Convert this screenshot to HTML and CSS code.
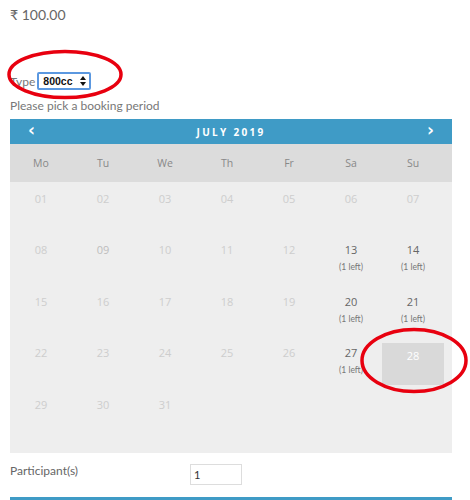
FILE: index.html
```html
<!DOCTYPE html>
<html>
<head>
<meta charset="utf-8">
<link rel="stylesheet" href="styles.css">
</head>
<body>
<div class="page">
  <p class="price">₹ 100.00</p>
  <div class="type-row">
    <label class="type-label" for="type">Type</label>
    <span class="select-wrap">
      <select id="type" class="type-select"><option>800cc</option></select>
      <svg class="select-arrows" width="6" height="10" viewBox="0 0 6 10"><path d="M3 0 L6 4 H0 Z M3 10 L6 6 H0 Z" fill="#111"/></svg>
    </span>
  </div>
  <p class="pick">Please pick a booking period</p>
  <div class="cal">
    <div class="cal-head">
      <span class="chev">&#x2039;</span>
      <span class="month">JULY 2019</span>
      <span class="chev">&#x203A;</span>
    </div>
    <div class="cal-dow">
      <span>Mo</span><span>Tu</span><span>We</span><span>Th</span><span>Fr</span><span>Sa</span><span>Su</span>
    </div>
    <div class="cal-body">
      <div class="day off"><span class="num">01</span></div>
      <div class="day off"><span class="num">02</span></div>
      <div class="day off"><span class="num">03</span></div>
      <div class="day off"><span class="num">04</span></div>
      <div class="day off"><span class="num">05</span></div>
      <div class="day off"><span class="num">06</span></div>
      <div class="day off"><span class="num">07</span></div>
      <div class="day off"><span class="num">08</span></div>
      <div class="day off dim"><span class="num">09</span></div>
      <div class="day off"><span class="num">10</span></div>
      <div class="day off"><span class="num">11</span></div>
      <div class="day off"><span class="num">12</span></div>
      <div class="day"><span class="num">13</span><span class="left">(1 left)</span></div>
      <div class="day"><span class="num">14</span><span class="left">(1 left)</span></div>
      <div class="day off"><span class="num">15</span></div>
      <div class="day off"><span class="num">16</span></div>
      <div class="day off"><span class="num">17</span></div>
      <div class="day off"><span class="num">18</span></div>
      <div class="day off"><span class="num">19</span></div>
      <div class="day"><span class="num">20</span><span class="left">(1 left)</span></div>
      <div class="day"><span class="num">21</span><span class="left">(1 left)</span></div>
      <div class="day off"><span class="num">22</span></div>
      <div class="day off"><span class="num">23</span></div>
      <div class="day off"><span class="num">24</span></div>
      <div class="day off"><span class="num">25</span></div>
      <div class="day off"><span class="num">26</span></div>
      <div class="day"><span class="num">27</span><span class="left">(1 left)</span></div>
      <div class="day sel"><span class="num">28</span></div>
      <div class="day off"><span class="num">29</span></div>
      <div class="day off"><span class="num">30</span></div>
      <div class="day off"><span class="num">31</span></div>
    </div>
  </div>
  <div class="part-row">
    <label class="part-label" for="part">Participant(s)</label>
    <input id="part" class="part-input" type="text" value="1">
  </div>
  <div class="submit-bar"></div>
</div>
<svg class="marks" width="470" height="500" viewBox="0 0 470 500">
  <ellipse cx="65" cy="74.5" rx="56" ry="23" fill="none" stroke="#e8000f" stroke-width="3.5"/>
  <ellipse cx="414" cy="360.5" rx="52" ry="31" fill="none" stroke="#e8000f" stroke-width="3.5"/>
</svg>
</body>
</html>
```

FILE: styles.css
```css
html, body {
  margin: 0;
  padding: 0;
  background: #fff;
}
body {
  position: relative;
  width: 470px;
  height: 500px;
  overflow: hidden;
  font-family: "Lato", "Open Sans", sans-serif;
  color: #666;
}
.page {
  padding: 0 18px 0 10px;
}
.price {
  margin: 0;
  padding-top: 6px;
  font-size: 14px;
  line-height: 18px;
  color: #666;
}
.type-row {
  display: flex;
  align-items: center;
  margin-top: 48px;
  height: 18px;
}
.type-label {
  font-size: 12px;
  color: #777;
  margin-right: 2px;
}
.select-wrap {
  position: relative;
  display: flex;
}
.type-select {
  -webkit-appearance: none;
  appearance: none;
  width: 54px;
  height: 18px;
  box-sizing: border-box;
  border: 2px solid #5b98e0;
  border-radius: 2px;
  background: #fff;
  font-family: "Liberation Sans", sans-serif;
  font-weight: bold;
  font-size: 10.5px;
  color: #111;
  padding: 0 0 0 4px;
  margin: 0;
  outline: none;
}
.select-arrows {
  position: absolute;
  right: 5px;
  top: 4px;
}
.pick {
  margin: 8px 0 0;
  font-size: 12px;
  line-height: 16px;
  color: #777;
}
.cal {
  margin-top: 5px;
  width: 442px;
}
.cal-head {
  height: 25px;
  background: #3f9bc6;
  display: flex;
  align-items: center;
  justify-content: space-between;
  padding: 0 18px;
  color: #fff;
}
.chev {
  font-family: "DejaVu Sans", sans-serif;
  font-weight: bold;
  font-size: 17px;
  line-height: 25px;
  margin-top: -3px;
}
.month {
  font-family: "Open Sans", sans-serif;
  font-weight: bold;
  font-size: 10px;
  letter-spacing: 2.3px;
}
.cal-dow {
  height: 38px;
  background: #dcdcdc;
  display: grid;
  grid-template-columns: repeat(7, 62px);
  align-items: center;
  justify-items: center;
  font-family: "Open Sans", sans-serif;
  font-size: 10.5px;
  color: #888;
}
.cal-body {
  background: #eeeeee;
  display: grid;
  grid-template-columns: repeat(7, 62px);
  grid-auto-rows: 51.5px;
  padding-bottom: 13.5px;
}
.day {
  margin-top: 6.5px;
  height: 42px;
  display: flex;
  flex-direction: column;
  align-items: center;
  font-family: "Open Sans", sans-serif;
}
.num {
  font-size: 11px;
  line-height: 15px;
  margin-top: 2px;
  color: #666;
}
.off .num {
  color: #cdcdcd;
}
.off.dim .num {
  color: #bdbdbd;
}
.left {
  font-family: "Lato", sans-serif;
  font-size: 8.5px;
  line-height: 11px;
  margin-top: 5px;
  color: #777;
}
.sel {
  background: #d9d9d9;
}
.sel .num {
  color: #fff;
  margin-top: 5px;
}
.part-row {
  display: flex;
  align-items: center;
  margin-top: 11px;
  height: 21px;
}
.part-label {
  width: 180px;
  font-size: 12px;
  color: #666;
  margin-top: -9px;
}
.part-input {
  width: 52px;
  height: 21px;
  box-sizing: border-box;
  border: 1px solid #ddd;
  padding: 0 3px;
  margin: 0;
  font-family: "Lato", sans-serif;
  font-size: 11px;
  color: #333;
  outline: none;
}
.submit-bar {
  margin-top: 12px;
  width: 442px;
  height: 10px;
  background: #3f9bc6;
}
.marks {
  position: absolute;
  left: 0;
  top: 0;
  pointer-events: none;
}
```
